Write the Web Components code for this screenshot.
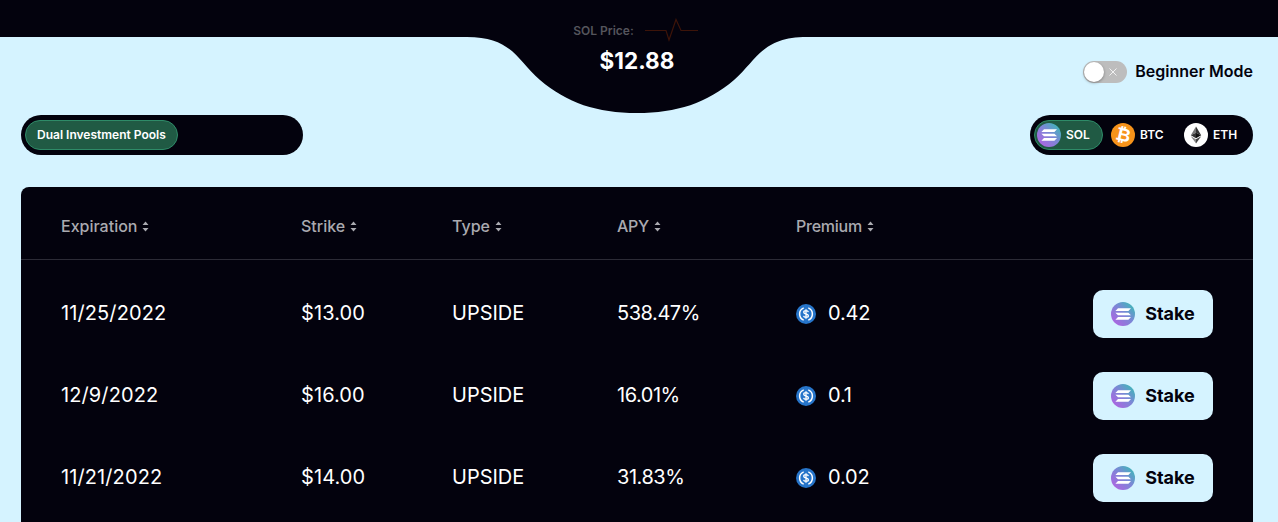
<!DOCTYPE html>
<html>
<head>
<meta charset="utf-8">
<title>Dual Investment</title>
<style>
  html, body { margin: 0; height: 100%; overflow: hidden; }
  body { background: #d5f3ff; font-family: Inter, "Liberation Sans", sans-serif; color: #03020d; }
</style>
</head>
<body>
<price-bar label="SOL Price:" price="$12.88"></price-bar>
<mode-row></mode-row>
<pool-row></pool-row>
<pool-table>
  <pool-row-item expiration="11/25/2022" strike="$13.00" type="UPSIDE" apy="538.47%" premium="0.42"></pool-row-item>
  <pool-row-item expiration="12/9/2022" strike="$16.00" type="UPSIDE" apy="16.01%" premium="0.1"></pool-row-item>
  <pool-row-item expiration="11/21/2022" strike="$14.00" type="UPSIDE" apy="31.83%" premium="0.02"></pool-row-item>
</pool-table>

<script>
// shared coin icons
let gradCount = 0
function solIcon(size) {
  let id = "solgrad" + gradCount++
  return `<svg width="${size}" height="${size}" viewBox="0 0 24 24" style="display:block;flex:none">
    <defs><linearGradient id="${id}" x1="0" y1="1" x2="1" y2="0">
      <stop offset="0.15" stop-color="#a868e0"/><stop offset="0.55" stop-color="#7a88d6"/><stop offset="0.95" stop-color="#36bdb4"/>
    </linearGradient></defs>
    <circle cx="12" cy="12" r="12" fill="url(#${id})"/>
    <path d="M7 6.300h13l-2.600 2.700H4.400zM4.400 10.700h13l2.600 2.600H7zM7 15h13l-2.600 2.700H4.400z" fill="#fff"/>
  </svg>`
}
function btcIcon(size) {
  return `<span style="width:${size}px;height:${size}px;border-radius:50%;background:#f7931a;color:#fff;display:flex;align-items:center;justify-content:center;flex:none;font:700 18px 'DejaVu Sans',sans-serif"><span style="transform:rotate(14deg)">₿</span></span>`
}
function ethIcon(size) {
  return `<svg width="${size}" height="${size}" viewBox="0 0 24 24" style="display:block;flex:none">
    <circle cx="12" cy="12" r="12" fill="#fff"/>
    <path d="M12 3.600v6.200l-5.200 2.400z" fill="#777"/>
    <path d="M12 3.600v6.200l5.200 2.400z" fill="#333"/>
    <path d="M6.800 12.200L12 9.800v5.500z" fill="#333"/>
    <path d="M17.200 12.200L12 9.800v5.500z" fill="#111"/>
    <path d="M6.800 13.200L12 16.300v4.200z" fill="#888"/>
    <path d="M17.200 13.200L12 16.300v4.200z" fill="#444"/>
  </svg>`
}
function usdcIcon(size) {
  return `<svg width="${size}" height="${size}" viewBox="0 0 20 20" style="display:block;flex:none">
    <circle cx="10" cy="10" r="10" fill="#2775ca"/>
    <path d="M7.700 3.900a6.600 6.600 0 0 0 0 12.200M12.300 3.900a6.600 6.600 0 0 1 0 12.200" fill="none" stroke="#fff" stroke-width="1.500"/>
    <path d="M12.400 8.100c-.3-1-1.100-1.400-2.400-1.400-1.400 0-2.300.6-2.300 1.600 0 2.300 4.700 1.100 4.700 3.500 0 1-1 1.600-2.400 1.600-1.300 0-2.200-.5-2.400-1.600M10 5.200v9.600" fill="none" stroke="#fff" stroke-width="1.300"/>
  </svg>`
}

class PriceBar extends HTMLElement {
  constructor() {
    super()
    this.attachShadow({ mode: "open" }).innerHTML = `
    <style>
      :host { display: block; height: 37px; background: #03020d; position: relative; }
      .bulge { position: absolute; left: 447px; top: 36px; display: block; }
      .price { position: absolute; left: 437px; width: 400px; top: 19px; display: flex; flex-direction: column; align-items: center; }
      .top { display: flex; align-items: center; gap: 11px; height: 22px; margin-left: -2px; }
      .label { font-size: 12px; font-weight: 600; color: #55555c; }
      .value { font-size: 22.5px; font-weight: 700; color: #fff; margin-top: 4px; line-height: 32px; }
    </style>
    <svg class="bulge" width="380" height="78" viewBox="-190 36 380 78">
      <path d="M-190 36V37H-170C-125 37-120 60-97 80-70 103-40 113 0 113 40 113 70 103 97 80 120 60 125 37 170 37H190V36Z" fill="#03020d"/>
    </svg>
    <div class="price">
      <div class="top">
        <span class="label"></span>
        <svg width="54" height="24" viewBox="0 0 54 24"><path d="M0 11.500H21L24 21 31 0.500 36 11.500H53" transform="translate(0 1)" fill="none" stroke="#3d1409" stroke-width="1.200"/></svg>
      </div>
      <div class="value"></div>
    </div>`
    this.shadowRoot.querySelector(".label").textContent = this.getAttribute("label")
    this.shadowRoot.querySelector(".value").textContent = this.getAttribute("price")
  }
}
customElements.define("price-bar", PriceBar)

class ModeRow extends HTMLElement {
  constructor() {
    super()
    this.attachShadow({ mode: "open" }).innerHTML = `
    <style>
      :host { display: flex; justify-content: flex-end; align-items: center; gap: 8px; padding: 23px 25px 0 0; height: 23px; }
      .switch { width: 44px; height: 22px; border-radius: 11px; background: #bdbdbd; position: relative; }
      .knob { position: absolute; left: 1px; top: 1px; width: 20px; height: 20px; border-radius: 50%; background: #fff; box-shadow: 0 1px 3px rgba(0,0,0,.35); }
      svg { position: absolute; left: 26px; top: 7px; }
      .text { font-size: 16px; font-weight: 600; color: #03020d; margin-top: -2px; letter-spacing: .02px; }
    </style>
    <div class="switch"><div class="knob"></div>
      <svg width="8" height="8" viewBox="0 0 8 8"><path d="M.5.5l7 7M7.500.5l-7 7" stroke="#f1f1f1" stroke-width="1"/></svg>
    </div>
    <div class="text">Beginner Mode</div>`
  }
}
customElements.define("mode-row", ModeRow)

class PoolRow extends HTMLElement {
  constructor() {
    super()
    this.attachShadow({ mode: "open" }).innerHTML = `
    <style>
      :host { display: flex; justify-content: space-between; padding: 32px 25px 0 21px; }
      .pill { height: 40px; background: #03020d; border-radius: 20px; display: flex; align-items: center; box-sizing: border-box; padding: 0 0 0 4px; }
      .left { width: 282px; }
      .tab { height: 30px; box-sizing: border-box; border: 1px solid #2e8b68; border-radius: 15px; background: #205a44; color: #fff; font-size: 12px; font-weight: 600; display: flex; align-items: center; padding-bottom: 2px; }
      .left .tab { padding-left: 11px; width: 153px; white-space: nowrap; }
      .coin { display: flex; align-items: center; gap: 5px; color: #fff; font-size: 12px; font-weight: 600; height: 30px; box-sizing: border-box; padding-bottom: 1px; }
      .coin svg, .coin > span { margin-top: 1px; }
      .coin.on { border: 1px solid #2e8b68; border-radius: 15px; background: #205a44; padding: 0 0 1px 2px; width: 69px; }
      .btc { margin-left: 8px; width: 73px; }
      .eth { width: 69px; }
    </style>
    <div class="pill left"><div class="tab">Dual Investment Pools</div></div>
    <div class="pill">
      <div class="coin on">${solIcon(24)}SOL</div>
      <div class="coin btc">${btcIcon(24)}BTC</div>
      <div class="coin eth">${ethIcon(24)}ETH</div>
    </div>`
  }
}
customElements.define("pool-row", PoolRow)

const COLS = "240px 151px 165px 179px 1fr"

class PoolTable extends HTMLElement {
  constructor() {
    super()
    this.attachShadow({ mode: "open" }).innerHTML = `
    <style>
      :host { display: block; margin: 32px 25px 0 21px; background: #03020d; border-radius: 8px; padding-bottom: 40px; }
      .head { display: grid; grid-template-columns: ${COLS}; padding: 6px 40px 0; box-sizing: border-box; height: 73px; align-items: center; border-bottom: 1px solid #2c2b36; }
      .th { display: flex; align-items: center; gap: 5px; color: #aaaab0; font-size: 16px; font-weight: 500; }
      .th.tight { letter-spacing: -.25px; }
      .body { padding-top: 13px; }
    </style>
    <div class="head">
      ${["Expiration", "Strike", "Type", "APY", "Premium"].map(t => `<div class="th ${t == "APY" || t == "Premium" ? "tight" : ""}">${t}
        <svg width="7" height="11" viewBox="0 0 7 11"><path d="M3.500.5L6.500 4H.5zM3.500 10.500L.5 7h6z" fill="#aaaab0"/></svg></div>`).join("")}
    </div>
    <div class="body"><slot></slot></div>`
  }
}
customElements.define("pool-table", PoolTable)

class PoolRowItem extends HTMLElement {
  constructor() {
    super()
    this.attachShadow({ mode: "open" }).innerHTML = `
    <style>
      :host { display: grid; grid-template-columns: ${COLS}; padding: 0 40px; height: 82px; align-items: center; color: #fff; font-size: 20px; font-weight: 400; }
      .cell { margin-top: -2px; }
      .date { letter-spacing: .1px; }
      .strike { letter-spacing: .1px; }
      .apy { letter-spacing: -.45px; }
      .premium { display: flex; align-items: center; gap: 12px; }
      .premium span { margin-top: -2px; letter-spacing: -.15px; }
      .row { display: flex; justify-content: space-between; align-items: center; }
      button { width: 120px; height: 48px; border: 0; border-radius: 10px; background: #d5f3ff; color: #03020d; font: 700 18px Inter, "Liberation Sans", sans-serif; display: flex; align-items: center; justify-content: center; gap: 10px; padding: 0; }
      button span { margin-top: -2px; }
    </style>
    <div class="cell date">${this.getAttribute("expiration")}</div>
    <div class="cell strike">${this.getAttribute("strike")}</div>
    <div class="cell type">${this.getAttribute("type")}</div>
    <div class="cell apy">${this.getAttribute("apy")}</div>
    <div class="row">
      <div class="premium">${usdcIcon(20)}<span>${this.getAttribute("premium")}</span></div>
      <button>${solIcon(24)}<span>Stake</span></button>
    </div>`
  }
}
customElements.define("pool-row-item", PoolRowItem)
</script>
</body>
</html>
